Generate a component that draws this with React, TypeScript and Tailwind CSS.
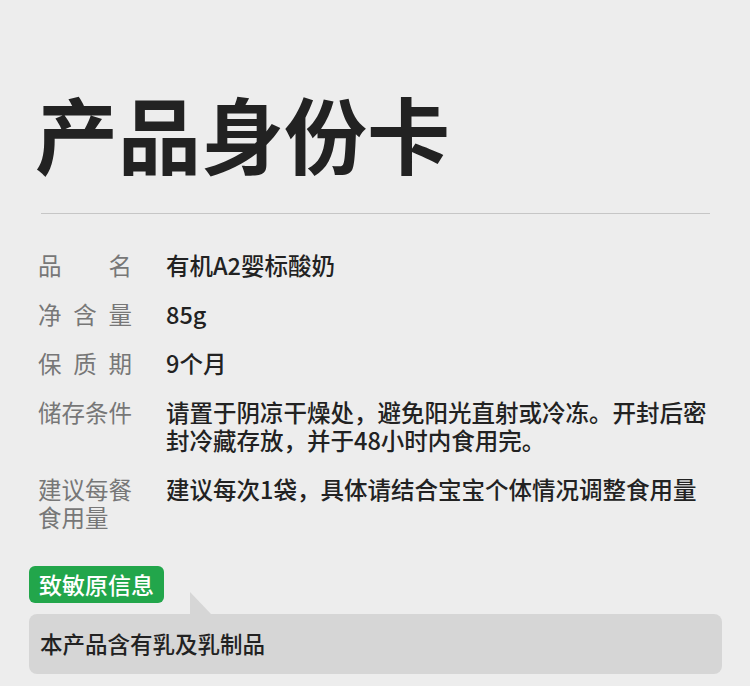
const rows: { label: string; value: string; justify?: boolean }[] = [
  { label: "品名", value: "有机A2婴标酸奶", justify: true },
  { label: "净含量", value: "85g", justify: true },
  { label: "保质期", value: "9个月", justify: true },
  {
    label: "储存条件",
    value: "请置于阴凉干燥处，避免阳光直射或冷冻。开封后密封冷藏存放，并于48小时内食用完。",
  },
];

export default function App() {
  return (
    <div className="w-[750px] h-[686px] overflow-hidden bg-[#ededed] text-[#222] font-['Noto_Sans_CJK_SC',sans-serif]">
      {/* Title */}
      <h1 className="pl-[35px] pt-[91px] text-[83px] leading-none font-bold text-[#222]">
        产品身份卡
      </h1>
      <div className="ml-[41px] mt-[39px] w-[669px] h-px bg-[#c6c6c6]" />

      {/* Info rows */}
      <div className="pl-[38px] pr-[40px] mt-[37px] flex flex-col gap-[21px] text-[23.5px] leading-[28px]">
        {rows.map((r) => (
          <div key={r.label} className="flex">
            <div
              className={`w-[94px] shrink-0 text-[#777] ${
                r.justify ? "[text-align-last:justify]" : ""
              }`}
            >
              {r.label}
            </div>
            <div className="ml-[34px] flex-1 font-medium">{r.value}</div>
          </div>
        ))}
        <div className="flex">
          <div className="w-[94px] shrink-0 text-[#777]">
            <div>建议每餐</div>
            <div>食用量</div>
          </div>
          <div className="ml-[34px] flex-1 font-medium">
            建议每次1袋，具体请结合宝宝个体情况调整食用量
          </div>
        </div>
      </div>

      {/* Allergen */}
      <div className="mt-[35px] pl-[29px] pr-[28px]">
        <div className="relative inline-flex h-[37px] items-center rounded-[6px] bg-[#22a64b] px-[10px] text-[23px] font-medium text-white">
          致敏原信息
        </div>
        <div className="relative">
          <svg
            className="absolute left-[161px] top-[-22px]"
            width="22"
            height="23"
            viewBox="0 0 22 23"
          >
            <polygon points="0,0 0,23 22,23" fill="#d6d6d6" />
          </svg>
          <div className="mt-[11px] flex h-[60px] items-center rounded-[8px] bg-[#d6d6d6] px-[11px] text-[22.5px] font-medium text-[#222]">
            本产品含有乳及乳制品
          </div>
        </div>
      </div>
    </div>
  );
}
